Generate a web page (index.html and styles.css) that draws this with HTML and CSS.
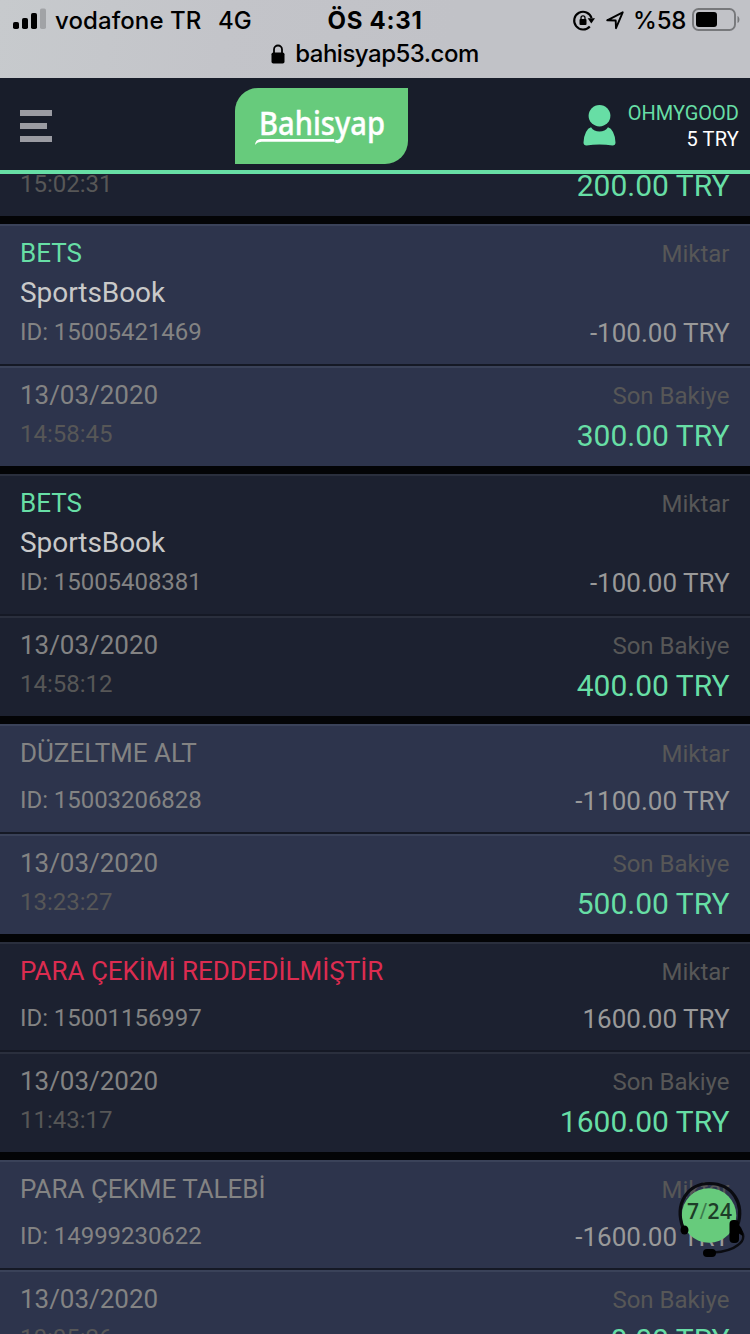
FILE: index.html
```html
<!DOCTYPE html>
<html lang="tr">
<head>
<meta charset="utf-8">
<title>Bahisyap</title>
<link rel="stylesheet" href="styles.css">
</head>
<body>
<div class="screen">
  <div class="browser">
    <div class="status">
      <div class="carrier">
        <svg width="33" height="22" viewBox="0 0 33 22"><rect x="0" y="14" width="6" height="7" rx="1.8"/><rect x="9" y="10" width="6" height="11" rx="1.8"/><rect x="18" y="5" width="6" height="16" rx="1.8"/><rect x="27" y="0.500" width="6" height="20.500" rx="1.800" fill="#a1a3a6"/></svg>
        <span class="carrier-name">vodafone TR</span><span class="network">4G</span>
      </div>
      <div class="clock">ÖS 4:31</div>
      <div class="indicators">
        <svg class="rotation" width="22" height="21" viewBox="0 0 22 21"><path d="M16.800 16.500A8.900 8.900 0 1 1 18.600 8" fill="none" stroke="#000" stroke-width="2.100"/><path d="M14.700 8.300h7.300l-3.700 5.200z"/><rect x="6.500" y="9" width="7" height="6" rx="1"/><path d="M8 9.500V7.800a2 2 0 0 1 4 0v1.700" fill="none" stroke="#000" stroke-width="1.300"/></svg>
        <svg class="location" width="18" height="19" viewBox="0 0 18 19"><path d="M1.200 9.300L16.700 1.300 10 17.200 9.700 9.500z" fill="none" stroke="#000" stroke-width="1.900" stroke-linejoin="round"/></svg>
        <span class="percent">%58</span>
        <svg class="battery" width="48" height="24" viewBox="0 0 48 24"><rect x="1" y="1" width="42" height="21" rx="5.500" fill="none" stroke="#77787b" stroke-width="1.900"/><rect x="4" y="4" width="21" height="15" rx="3"/><path d="M45.500 8c2.600 1 2.600 6 0 7z" fill="#77787b"/></svg>
      </div>
    </div>
    <div class="address">
      <svg width="14" height="20" viewBox="0 0 14 20"><rect x="0.500" y="8.500" width="13" height="11" rx="1.800"/><path d="M3 9V5.500a4 4 0 0 1 8 0V9" fill="none" stroke="#000" stroke-width="1.800"/></svg>
      <span>bahisyap53.com</span>
    </div>
  </div>

  <header class="header">
    <div class="menu"><i></i><i class="short"></i><i></i></div>
    <div class="logo">
      <svg width="173" height="76" viewBox="0 0 173 76"><text class="logo-text" x="24" y="47" textLength="126" lengthAdjust="spacingAndGlyphs">Bahisyap</text><path d="M20 57c.5-4.500 3-6 7-6h72l.8 2.800H30c-5 0-7.500.2-10 3.200z" fill="#fff"/></svg>
    </div>
    <div class="account">
      <svg width="33" height="41" viewBox="0 0 33 41"><ellipse cx="16.500" cy="10.700" rx="10.900" ry="10.700"/><path d="M8 22.200Q5 23 3 27Q0.500 32 .5 37.500Q.5 40.500 3.500 40.500Q16.500 38.500 29.500 40.500Q32.500 40.500 32.500 37.500Q32.500 32 30 27Q28 23 25 22.200Q22 26.500 16.500 26.500Q11 26.500 8 22.200z"/></svg>
      <div class="account-text"><span class="user">OHMYGOOD</span><span class="funds">5 TRY</span></div>
    </div>
  </header>

  <main class="list">
    <article class="record dark">
      <div class="row"><div class="left"><span class="date">13/03/2020</span><span class="time">15:02:31</span></div><div class="right"><span class="label">Son Bakiye</span><span class="balance">200.00 TRY</span></div></div>
    </article>
    <article class="record">
      <div class="row tall"><div class="left"><span class="type bet">BETS</span><span class="game">SportsBook</span><span class="id">ID: 15005421469</span></div><div class="right"><span class="label">Miktar</span><span class="amount">-100.00 TRY</span></div></div>
      <div class="row"><div class="left"><span class="date">13/03/2020</span><span class="time">14:58:45</span></div><div class="right"><span class="label">Son Bakiye</span><span class="balance">300.00 TRY</span></div></div>
    </article>
    <article class="record dark">
      <div class="row tall"><div class="left"><span class="type bet">BETS</span><span class="game">SportsBook</span><span class="id">ID: 15005408381</span></div><div class="right"><span class="label">Miktar</span><span class="amount">-100.00 TRY</span></div></div>
      <div class="row"><div class="left"><span class="date">13/03/2020</span><span class="time">14:58:12</span></div><div class="right"><span class="label">Son Bakiye</span><span class="balance">400.00 TRY</span></div></div>
    </article>
    <article class="record">
      <div class="row medium"><div class="left"><span class="type">DÜZELTME ALT</span><span class="id">ID: 15003206828</span></div><div class="right"><span class="label">Miktar</span><span class="amount">-1100.00 TRY</span></div></div>
      <div class="row"><div class="left"><span class="date">13/03/2020</span><span class="time">13:23:27</span></div><div class="right"><span class="label">Son Bakiye</span><span class="balance">500.00 TRY</span></div></div>
    </article>
    <article class="record dark">
      <div class="row medium"><div class="left"><span class="type rejected">PARA ÇEKİMİ REDDEDİLMİŞTİR</span><span class="id">ID: 15001156997</span></div><div class="right"><span class="label">Miktar</span><span class="amount">1600.00 TRY</span></div></div>
      <div class="row"><div class="left"><span class="date">13/03/2020</span><span class="time">11:43:17</span></div><div class="right"><span class="label">Son Bakiye</span><span class="balance">1600.00 TRY</span></div></div>
    </article>
    <article class="record">
      <div class="row medium"><div class="left"><span class="type">PARA ÇEKME TALEBİ</span><span class="id">ID: 14999230622</span></div><div class="right"><span class="label">Miktar</span><span class="amount">-1600.00 TRY</span></div></div>
      <div class="row"><div class="left"><span class="date">13/03/2020</span><span class="time">10:05:26</span></div><div class="right"><span class="label">Son Bakiye</span><span class="balance">0.00 TRY</span></div></div>
    </article>
  </main>

  <div class="support">
    <svg width="70" height="78" viewBox="0 0 70 78"><circle cx="34" cy="36.500" r="27.300" fill="#67cb7c"/><path d="M8 49C-1 24 13 4.500 34.500 4.500C57 4.500 70 24 62.500 47" fill="none" stroke="#0a0b10" stroke-width="3.200"/><path d="M63 49c7 5 7 12 0 17q-8 6.500-25 7.500" fill="none" stroke="#0a0b10" stroke-width="2.400"/><rect x="54.500" y="41" width="9.500" height="23" rx="4"/><path d="M62 45c3 1 6 5 6 12l-5-3z"/><ellipse cx="9.500" cy="51" rx="4" ry="4.500"/><rect x="28" y="70" width="13" height="8" rx="4"/><text class="support-text" x="12" y="40" textLength="45" lengthAdjust="spacing">7<tspan class="slash">/</tspan>24</text></svg>
  </div>
</div>
</body>
</html>
```
FILE: styles.css
```css
* { box-sizing: border-box; }
body { margin: 0; background: #030406; }
.screen { position: relative; width: 750px; height: 1334px; overflow: hidden; font-family: Roboto, sans-serif; display: flex; flex-direction: column; }
svg { display: block; flex: none; overflow: visible; }

.browser { height: 78px; flex: none; background: linear-gradient(100deg, #c7cacd 0, #c3c4c9 30%, #c1c2c7 60%); font-family: Inter, sans-serif; font-weight: 500; color: #000; position: relative; z-index: 2; }
.status { display: grid; grid-template-columns: 1fr auto 1fr; height: 40px; padding: 1px 11px 0 13px; align-items: center; font-size: 24px; line-height: 39px; }
.carrier { display: flex; align-items: center; }
.carrier svg { margin-right: 9px; margin-bottom: 3px; }
.carrier-name { width: 163px; white-space: nowrap; letter-spacing: 0.1px; }
.clock { font-weight: 700; font-size: 24px; letter-spacing: 0.7px; margin-right: 2px; }
.indicators { display: flex; justify-content: flex-end; align-items: center; }
.rotation, .battery { margin-bottom: 1px; }
.location { margin: 0 9px 0 11px; }
.percent { letter-spacing: -0.3px; }
.battery { margin-left: 6px; }
.indicators { margin-right: -1px; }
.address { display: flex; justify-content: center; align-items: center; height: 28px; gap: 10px; font-size: 24px; line-height: 28px; letter-spacing: -0.5px; }

.header { height: 96px; flex: none; background: #181d2a; border-bottom: 4px solid #67dea5; position: relative; z-index: 2; display: flex; justify-content: space-between; padding: 10px 10px 0 20px; }
.menu { width: 215px; padding-top: 22px; display: flex; flex-direction: column; gap: 7px; }
.menu i { width: 32px; height: 6px; background: #9a9ba2; }
.menu .short { width: 27px; }
.logo { width: 173px; height: 76px; background: #67cb7c; border-radius: 23px 0 23px 0; }
.logo-text { font-family: "Noto Sans", sans-serif; font-weight: 500; font-size: 32px; fill: #fff; stroke: #fff; stroke-width: 0.4px; }
.account { width: 332px; display: flex; justify-content: flex-end; gap: 12px; padding-top: 17px; }
.account svg { fill: #67dea5; }
.account-text { display: flex; flex-direction: column; text-align: right; font-size: 20px; line-height: 26px; margin: -5px 1px 0 0; }
.user { color: #67dea5; }
.funds { color: #fff; letter-spacing: 0.2px; }

.list { margin-top: -58px; display: flex; flex-direction: column; gap: 8px; flex: none; }
.record { display: flex; flex-direction: column; gap: 2px; background: #151925; color: #838383; }
.row { height: 100px; padding: 7px 20px 0; border-top: 2px solid #3a4259; background: #2d344c; display: flex; justify-content: space-between; }
.dark .row { background: #1c2130; border-top-color: #2a2f3d; }
.row.tall { height: 140px; }
.row.medium { height: 108px; }
.left, .right { display: flex; flex-direction: column; white-space: nowrap; }
.right { text-align: right; padding-top: 1px; margin-right: 0.5px; }
.type, .date { font-size: 26px; line-height: 40px; letter-spacing: -0.03px; }
.bet { color: #67dea5; }
.rejected { color: #dc2c50; }
.game { font-size: 28px; line-height: 40px; color: #c9c9c9; letter-spacing: -0.05px; }
.id { font-size: 24px; line-height: 38px; letter-spacing: -0.05px; }
.time { font-size: 24px; line-height: 38px; color: #575757; }
.label { font-size: 24px; line-height: 40px; color: #575757; }
.amount { font-size: 26px; line-height: 38px; color: #999; }
.balance { font-size: 30px; line-height: 40px; color: #67dea5; }
.medium .id, .medium .amount { margin-top: 8px; }
.tall .amount { margin-top: 40px; }

.support { position: absolute; left: 675px; top: 1179px; z-index: 3; }
.support-text { font-family: "Open Sans", sans-serif; font-weight: 600; font-size: 21px; fill: #1d3d28; }
.slash { font-weight: 400; fill: #3c7a4c; }
```
